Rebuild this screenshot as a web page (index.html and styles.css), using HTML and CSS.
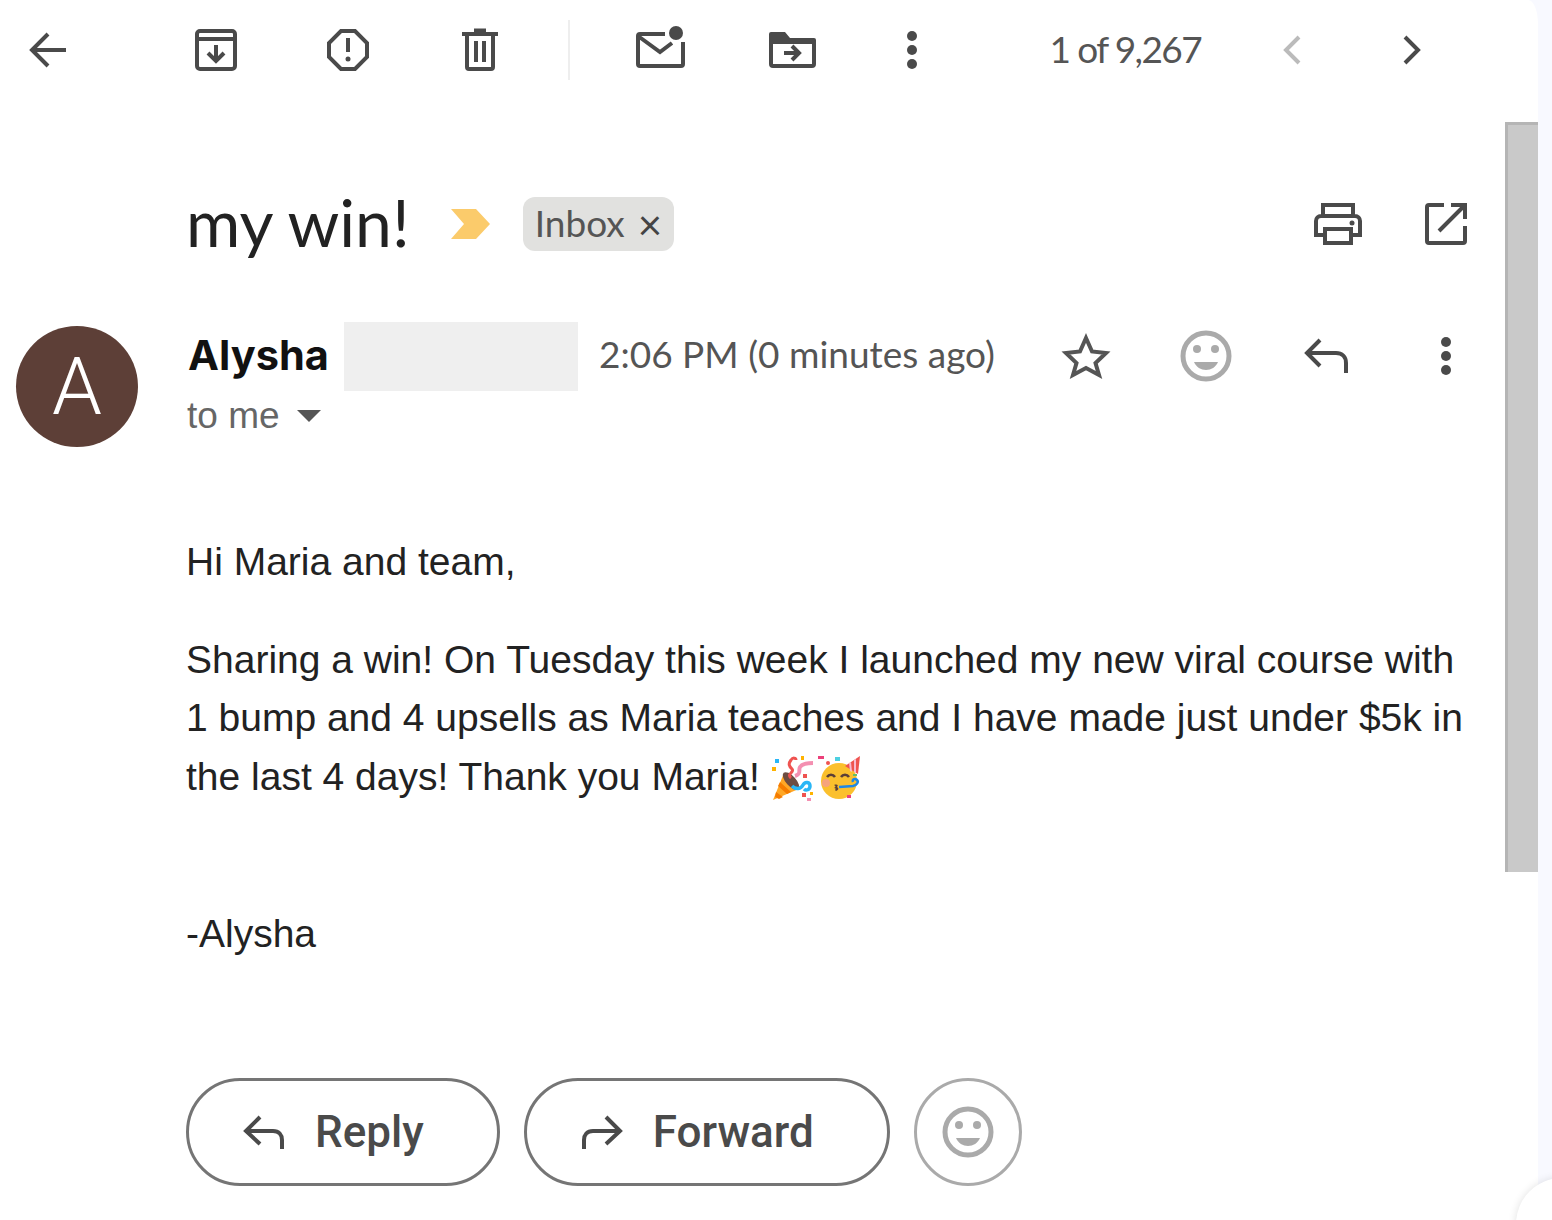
FILE: index.html
```html
<!DOCTYPE html>
<html lang="en">
<head>
  <meta charset="UTF-8" />
  <title>my win! - Inbox</title>
  <link rel="stylesheet" href="styles.css">
</head>
<body>

  <div class="mail">

    <div class="toolbar">
      <svg class="icon back" viewBox="0 0 56 56"><path d="M28 12 12 28l16 16M12 28h34"/></svg>
      <svg class="icon archive" viewBox="0 0 56 56"><rect x="9" y="9" width="38" height="38" rx="3"/><path d="M9 17h38M28 23v15M20 31l8 8 8-8"/></svg>
      <svg class="icon tool" viewBox="0 0 56 56"><path d="M21 9h14l12 12v14L35 47H21L9 35V21zM28 16v14"/><circle class="solid" cx="28" cy="37" r="2.5"/></svg>
      <svg class="icon tool" viewBox="0 0 56 56"><path d="M10 12h36M22 8.500h12M15 13v32a2 2 0 0 0 2 2h22a2 2 0 0 0 2-2V13M24 19v21M32 19v21"/></svg>
      <div class="divider"></div>
      <svg class="icon mail-unread" viewBox="0 0 56 56"><path d="M33 12H8a2 2 0 0 0-2 2v28a2 2 0 0 0 2 2h41a2 2 0 0 0 2-2V20M6 14l22 16 12-9"/><circle class="solid" cx="44" cy="11" r="7"/></svg>
      <svg class="icon tool" viewBox="0 0 56 56"><path class="solid" d="M7 10h14l5 6h24a2 2 0 0 1 2 2v4H5v-10a2 2 0 0 1 2-2z"/><path d="M7 18v24a2 2 0 0 0 2 2h39a2 2 0 0 0 2-2V18M20 31h14M28 24l7 7-7 7"/></svg>
      <svg class="icon more" viewBox="0 0 56 56"><circle class="solid" cx="28" cy="14" r="5"/><circle class="solid" cx="28" cy="28" r="5"/><circle class="solid" cx="28" cy="42" r="5"/></svg>
      <div class="paging">
        <span class="count">1 of 9,267</span>
        <svg class="icon off" viewBox="0 0 56 56"><path d="M35 15 22 28l13 13"/></svg>
        <svg class="icon" viewBox="0 0 56 56"><path d="M21 15l13 13-13 13"/></svg>
      </div>
    </div>

    <div class="subject-row">
      <h1 class="subject">my win!</h1>
      <svg class="label-mark" viewBox="0 0 40 30"><path d="M0 0h25l14 15-14 15H0l13-15z"/></svg>
      <span class="chip"><span class="chip-text">Inbox</span> <span class="chip-x">×</span></span>
      <div class="subject-actions">
        <svg class="icon" viewBox="0 0 56 56"><path d="M13 19V9h30v10M13 39H6V25a5 5 0 0 1 5-5h34a5 5 0 0 1 5 5v14h-7M15 33h26v14H15z"/><circle class="solid" cx="42" cy="27" r="2.500"/></svg>
        <svg class="icon" viewBox="0 0 56 56"><path d="M26 9H11a2 2 0 0 0-2 2v34a2 2 0 0 0 2 2h34a2 2 0 0 0 2-2V30M33 9h14v14M47 9 21 35"/></svg>
      </div>
    </div>

    <div class="message">
      <div class="avatar">A</div>
      <div class="message-main">
        <div class="sender-row">
          <span class="sender">Alysha</span>
          <div class="hidden-address"></div>
          <span class="time">2:06 PM (0 minutes ago)</span>
          <div class="sender-actions">
            <svg class="icon star" viewBox="0 0 56 56"><path d="M28 10l6 13.500L48 25 37.500 35 41 47l-13-7-13 7 3.500-12L8 25l14-1.500z"/></svg>
            <svg class="icon smile" viewBox="0 0 56 56"><circle cx="28" cy="28" r="23"/><circle class="solid" cx="19" cy="21" r="4"/><circle class="solid" cx="37" cy="21" r="4"/><path class="solid" d="M16 34h24c-2 5-7 8-12 8s-10-3-12-8z"/></svg>
            <svg class="icon" viewBox="0 0 56 56"><path d="M22 12 9 25l13 13M9 25h29c6 0 10 4 10 10v10"/></svg>
            <svg class="icon" viewBox="0 0 56 56"><circle class="solid" cx="28" cy="14" r="5"/><circle class="solid" cx="28" cy="28" r="5"/><circle class="solid" cx="28" cy="42" r="5"/></svg>
          </div>
        </div>
        <div class="to-row">to me <span class="caret"></span></div>

        <div class="body-text">
          <p>Hi Maria and team,</p>
          <p>Sharing a win! On Tuesday this week I launched my new viral course with 1 bump and 4 upsells as Maria teaches and I have made just under $5k in the last 4 days! Thank you Maria!
            <svg class="emoji" viewBox="0 0 44 48">
              <path fill="#ffa726" d="M2 45 13 18l17 15z"/>
              <path fill="#f57c00" d="M5 37l7 5-4 2-4-2zM9 27l11 10-4 2-9-8z"/>
              <ellipse fill="#6d4c41" cx="20" cy="26" rx="5" ry="11" transform="rotate(-42 20 26)"/>
              <path fill="none" stroke="#ef5350" stroke-width="3" d="M20 23c-5-4 4-6 1-9s-4-5-1-9c2-3 5-2 5 0"/>
              <path fill="none" stroke="#f48fb1" stroke-width="4" d="M24 21c7-2 3-6 5-9s8-4 13-4"/>
              <path fill="none" stroke="#29b6f6" stroke-width="3.500" d="M21 31c4 4 9 3 11-1s7-3 7 1-4 5-6 3"/>
              <rect fill="#29b6f6" x="4" y="4" width="4" height="4"/>
              <rect fill="#ffb300" x="1" y="12" width="4" height="4"/>
              <rect fill="#ffb300" x="30" y="1" width="3" height="4"/>
              <rect fill="#ef5350" x="32" y="19" width="4" height="4"/>
              <rect fill="#ef5350" x="31" y="38" width="4" height="4"/>
              <rect fill="#ffb300" x="39" y="37" width="3" height="3"/>
              <rect fill="#f48fb1" x="36" y="43" width="4" height="3"/>
            </svg><svg class="emoji emoji-face" viewBox="0 0 48 48">
              <circle fill="#fbc02d" cx="24" cy="26" r="18"/>
              <circle fill="#f48fb1" opacity=".6" cx="11" cy="28" r="4"/>
              <path fill="#ef5350" d="M30 11 45 1l-2 18z"/>
              <path fill="#f8bbd0" d="M34 8l2-1 1 10-2-1zM39 5l2-1 0 14-2-1z"/>
              <path fill="none" stroke="#5d4037" stroke-width="2.500" d="M12 22c2-3 6-3 8 0M26 22c2-3 6-3 8 0"/>
              <path fill="#5d4037" d="M19 30c3-1 5 0 3 2 2 1 2 3-1 4l-1-1c1-1 1-2-1-2 2-1 2-2 0-3z"/>
              <path fill="none" stroke="#1e88e5" stroke-width="2.500" d="M24 32l14-1c4-1 6-4 4-6s-5-1-4 2"/>
              <rect fill="#ec407a" x="3" y="1" width="6" height="3"/>
              <rect fill="#4dd0e1" x="20" y="2" width="5" height="4"/>
              <circle fill="#ef5350" cx="13" cy="8" r="2"/>
              <rect fill="#66bb6a" x="38" y="19" width="4" height="2"/>
              <rect fill="#ec407a" x="32" y="40" width="4" height="3"/>
            </svg></p>
          <p class="signature">-Alysha</p>
        </div>

        <div class="reply-row">
          <button class="pill">
            <svg class="pill-icon" viewBox="0 0 44 36"><path d="M18 3 4 17l14 13M4 17h27c6 0 9 4 9 9v9"/></svg>
            Reply
          </button>
          <button class="pill">
            <svg class="pill-icon" viewBox="0 0 44 36"><path d="M26 3l14 14-14 13M40 17H13c-6 0-9 4-9 9v9"/></svg>
            Forward
          </button>
          <button class="pill round">
            <svg class="icon smile" viewBox="0 0 56 56"><circle cx="28" cy="28" r="23"/><circle class="solid" cx="19" cy="21" r="4"/><circle class="solid" cx="37" cy="21" r="4"/><path class="solid" d="M16 34h24c-2 5-7 8-12 8s-10-3-12-8z"/></svg>
          </button>
        </div>
      </div>
    </div>

    <div class="scrollbar"></div>
  </div>

  <div class="corner"></div>

</body>
</html>
```

FILE: styles.css
```css
* {
  box-sizing: border-box;
}
body {
  margin: 0;
  width: 1552px;
  height: 1220px;
  overflow: hidden;
  position: relative;
  background: #f8f9ff;
  font-family: 'Liberation Sans', Arial, sans-serif;
  color: #222;
}

.mail {
  position: relative;
  width: 1538px;
  height: 1220px;
  background: #fff;
  border-top-right-radius: 10px 24px;
}

/* icons: all drawn on a 56 box */
.icon {
  width: 56px;
  height: 56px;
  flex: none;
  fill: none;
  stroke: #4a4a4a;
  stroke-width: 4;
}
.icon .solid {
  fill: #4a4a4a;
  stroke: none;
}
.icon.off {
  stroke: #bbb;
}
.icon.star {
  stroke: #555;
}
.icon.smile {
  stroke: #aaa;
  stroke-width: 5;
}
.icon.smile .solid {
  fill: #aaa;
}

.toolbar {
  display: flex;
  align-items: center;
  height: 100px;
  padding: 0 98px 0 20px;
}
.archive {
  margin-left: 112px;
}
.tool {
  margin-left: 76px;
}
.divider {
  width: 2px;
  height: 60px;
  margin: 0 62px 0 60px;
  background: #eee;
}
.more {
  margin-left: 64px;
}
.paging {
  display: flex;
  align-items: center;
  gap: 64px;
  margin-left: auto;
}
.count {
  margin: -4px -1px 0 0;
  font-family: 'Lato', sans-serif;
  font-size: 37px;
  letter-spacing: -1.6px;
  color: #555;
}

.subject-row {
  display: flex;
  align-items: center;
  height: 108px;
  margin-top: 70px;
  padding: 0 64px 0 186px;
}
.subject {
  margin: -6px 0 0;
  font-family: 'Lato', sans-serif;
  font-size: 66px;
  font-weight: 400;
  color: #222;
}
.label-mark {
  width: 40px;
  height: 30px;
  margin-left: 41px;
  fill: #fbcb6b;
}
.chip {
  display: flex;
  align-items: center;
  gap: 13px;
  height: 54px;
  margin-left: 32px;
  padding: 0 12px;
  border-radius: 12px;
  background: #e1e1df;
  font-family: 'Lato', sans-serif;
  font-size: 37px;
  color: #555;
}
.chip-text {
  margin-top: -4px;
}
.chip-x {
  font-size: 42px;
  color: #444;
}
.subject-actions {
  display: flex;
  gap: 52px;
  margin-left: auto;
}

.message {
  display: flex;
  gap: 48px;
  margin-top: 44px;
  padding-left: 16px;
}
.avatar {
  display: flex;
  align-items: center;
  justify-content: center;
  flex: none;
  width: 122px;
  height: 121px;
  margin-top: 4px;
  border-radius: 50%;
  background: #5d3f37;
  color: #fff;
  font-family: 'Roboto', sans-serif;
  font-size: 80px;
  font-weight: 300;
}
.message-main {
  width: 1288px;
}

.sender-row {
  display: flex;
  align-items: center;
  height: 69px;
}
.sender {
  width: 142px;
  margin: -3px 0 0 2px;
  font-family: 'Inter', sans-serif;
  font-size: 41.500px;
  font-weight: 700;
  color: #111;
}
.hidden-address {
  width: 234px;
  height: 69px;
  margin-left: 14px;
  background: #efefef;
}
.time {
  margin: -6px 0 0 21px;
  font-family: 'Lato', sans-serif;
  font-size: 37px;
  color: #555;
}
.sender-actions {
  display: flex;
  gap: 64px;
  margin: -1px 0 0 auto;
}
.to-row {
  display: flex;
  align-items: center;
  height: 50px;
  padding-left: 1px;
  font-size: 37px;
  color: #666;
}
.caret {
  width: 0;
  height: 0;
  margin-left: 17px;
  border: 12px solid transparent;
  border-top-color: #555;
  border-bottom: 0;
}

.body-text {
  margin-top: 92px;
  font-size: 39px;
  line-height: 58.5px;
  color: #222;
}
.body-text p {
  margin: 0 0 39px;
}
.body-text .signature {
  margin: 99px 0 0;
}
.emoji {
  width: 44px;
  height: 48px;
  vertical-align: -13px;
}
.emoji-face {
  width: 48px;
}

.reply-row {
  display: flex;
  gap: 24px;
  margin-top: 114px;
}
.pill {
  display: flex;
  align-items: center;
  gap: 29px;
  height: 108px;
  padding: 0 73px 0 53px;
  background: #fff;
  border: 3px solid #757575;
  border-radius: 54px;
  font-family: 'Roboto', sans-serif;
  font-size: 44px;
  font-weight: 500;
  color: #4a4a4a;
}
.pill-icon {
  width: 44px;
  height: 36px;
  fill: none;
  stroke: #4a4a4a;
  stroke-width: 4;
}
.pill.round {
  justify-content: center;
  width: 108px;
  padding: 0;
  border-color: #aaa;
}

/* things lying over the page */
.scrollbar {
  position: absolute;
  top: 122px;
  right: 0;
  width: 33px;
  height: 750px;
  background: #c9c9c9;
  border-top: 3px solid #b5b5b5;
  border-left: 3px solid #b5b5b5;
}
.corner {
  position: absolute;
  left: 1516px;
  top: 1178px;
  width: 92px;
  height: 92px;
  border-radius: 50%;
  background: #fff;
  box-shadow: 0 0 8px rgb(0 0 0 / 0.12);
}
```
